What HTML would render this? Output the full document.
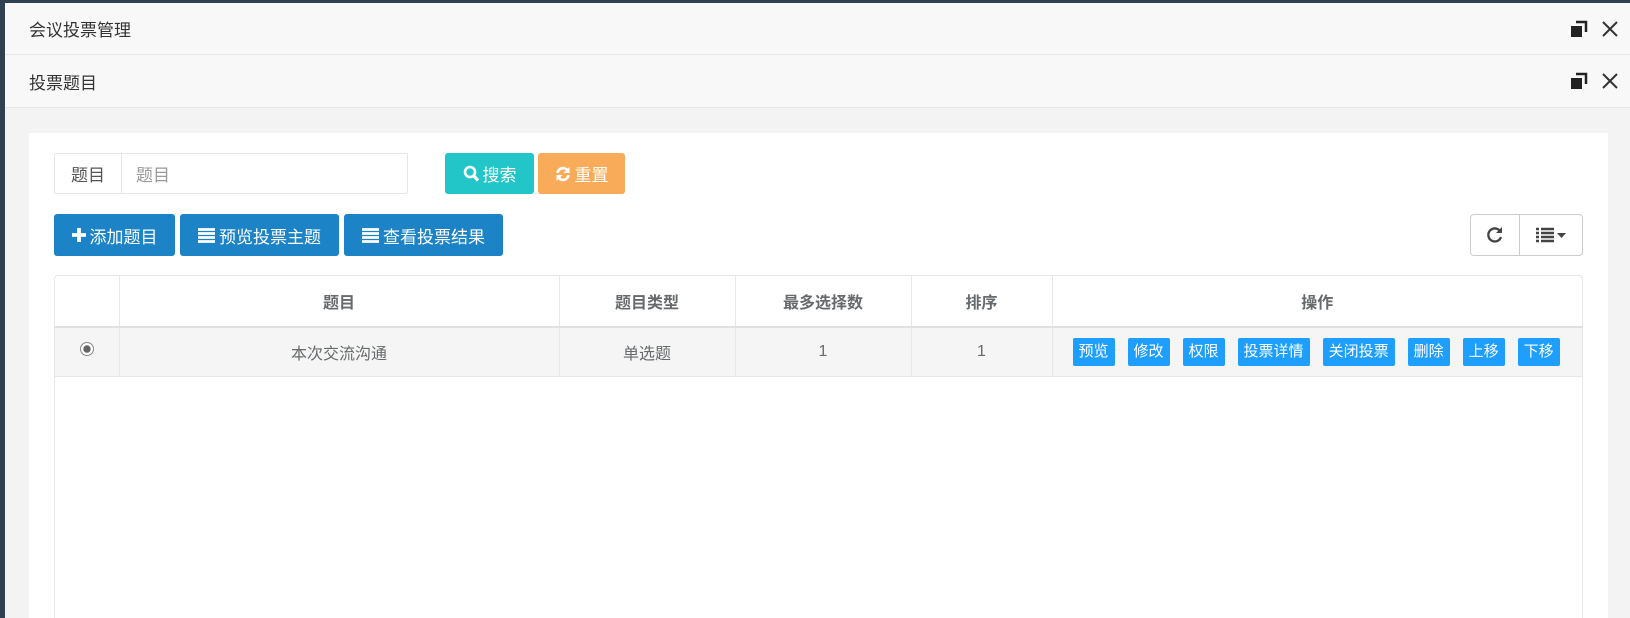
<!DOCTYPE html>
<html><head><meta charset="utf-8"><style>
*{box-sizing:border-box;margin:0;padding:0}
html,body{width:1630px;height:618px;overflow:hidden}
body{background:#2f4050;font-family:"Liberation Sans","Noto Sans CJK SC",sans-serif;position:relative}
.abs{position:absolute}
.hdr{left:5px;right:0;background:#f8f8f8;border-bottom:1px solid #e7e7e7;font-size:17px;color:#333;padding-left:24px;display:flex;align-items:center}
.ic{position:absolute;right:12px;display:flex;gap:14px;align-items:center}
.gray{left:5px;top:108px;right:0;height:510px;background:#f3f3f3}
.card{left:29px;top:133px;width:1579px;height:485px;background:#fff}
.btn{position:absolute;color:#fff;border-radius:3px;font-size:17px;display:flex;align-items:center;justify-content:center;gap:4px}
.blue{background:#1c84c6}
.tw{position:absolute;left:54px;top:275px;width:1529px;height:343px;overflow:hidden;border:1px solid #e7e7e7;border-bottom:none;border-radius:4px 4px 0 0}
table{border-collapse:collapse;width:100%;font-size:16px;color:#676a6c}
td,th{border:1px solid #e7e7e7;text-align:center}
th{height:51px;font-weight:bold;border-bottom:2px solid #e0e0e0;border-top:none}
td{height:49px;background:#f5f5f5}
tr td:first-child,tr th:first-child{border-left:none}
tr td:last-child,tr th:last-child{border-right:none}
.ab{display:inline-block;background:#1e9fff;color:#fff;font-size:15px;height:28px;line-height:28px;padding:0 6px;border-radius:2px;margin-right:13px}
</style></head><body>
<div class="abs hdr" style="top:3px;height:52px">会议投票管理
<div class="ic"><svg width="18" height="18"><path d="M6 2h10v10" stroke="#222" stroke-width="2.5" fill="none"/><rect x="1" y="6" width="11" height="11" fill="#222"/></svg><svg width="16" height="16"><path d="M1 1L15 15M15 1L1 15" stroke="#333" stroke-width="2"/></svg></div></div>
<div class="abs hdr" style="top:55px;height:53px">投票题目
<div class="ic"><svg width="18" height="18"><path d="M6 2h10v10" stroke="#222" stroke-width="2.5" fill="none"/><rect x="1" y="6" width="11" height="11" fill="#222"/></svg><svg width="16" height="16"><path d="M1 1L15 15M15 1L1 15" stroke="#333" stroke-width="2"/></svg></div></div>
<div class="abs gray"></div>
<div class="abs card"></div>
<div class="abs" style="left:54px;top:153px;width:354px;height:41px;border:1px solid #e5e6e7;display:flex;font-size:17px;border-radius:2px">
<div style="width:67px;border-right:1px solid #e5e6e7;display:flex;align-items:center;justify-content:center;color:#555">题目</div>
<div style="padding-left:14px;display:flex;align-items:center;color:#999">题目</div></div>
<div class="btn" style="left:445px;top:153px;width:89px;height:41px;background:#23c6c8"><svg width="16" height="17"><circle cx="7" cy="7" r="5" stroke="#fff" stroke-width="2.6" fill="none"/><path d="M10.5 10.5L15 15.5" stroke="#fff" stroke-width="3.2"/></svg>搜索</div>
<div class="btn" style="left:538px;top:153px;width:87px;height:41px;background:#f8ac59"><svg width="16" height="16"><path d="M2.5 7A5.5 5.5 0 0 1 12.5 4.5M13.5 9A5.5 5.5 0 0 1 3.5 11.5" stroke="#fff" stroke-width="2.7" fill="none"/><path d="M14.5 1v6h-6z M1.5 15v-6h6z" fill="#fff"/></svg>重置</div>
<div class="btn blue" style="left:54px;top:214px;width:121px;height:42px"><svg width="14" height="14"><path d="M7 0v14M0 7h14" stroke="#fff" stroke-width="3.8"/></svg>添加题目</div>
<div class="btn blue" style="left:180px;top:214px;width:159px;height:42px"><svg width="17" height="15"><path d="M0 1.5h17M0 5.5h17M0 9.5h17M0 13.5h17" stroke="#fff" stroke-width="2.8"/></svg>预览投票主题</div>
<div class="btn blue" style="left:344px;top:214px;width:159px;height:42px"><svg width="17" height="15"><path d="M0 1.5h17M0 5.5h17M0 9.5h17M0 13.5h17" stroke="#fff" stroke-width="2.8"/></svg>查看投票结果</div>
<div class="abs" style="left:1470px;top:214px;width:113px;height:42px;border:1px solid #ccc;border-radius:4px;display:flex">
<div style="width:49px;border-right:1px solid #ccc;display:flex;align-items:center;justify-content:center"><svg width="18" height="18"><path d="M14 5A6.5 6.5 0 1 0 15 11" stroke="#444" stroke-width="2.3" fill="none"/><path d="M16 1v6h-6z" fill="#444"/></svg></div>
<div style="flex:1;display:flex;align-items:center;justify-content:center;gap:3px"><svg width="18" height="16"><path d="M0 2h3M5 2h13M0 6h3M5 6h13M0 10h3M5 10h13M0 14h3M5 14h13" stroke="#444" stroke-width="2.6"/></svg><svg width="9" height="5"><path d="M0 0h9L4.5 5z" fill="#444"/></svg></div></div>
<div class="tw"><table>
<tr><th style="width:64px"></th><th style="width:440px">题目</th><th style="width:176px">题目类型</th><th style="width:176px">最多选择数</th><th style="width:141px">排序</th><th>操作</th></tr>
<tr><td><svg width="16" height="16"><circle cx="8" cy="8" r="6.5" fill="#fff" stroke="#888"/><circle cx="8" cy="8" r="3.7" fill="#666"/></svg></td><td>本次交流沟通</td><td>单选题</td><td>1</td><td>1</td>
<td style="text-align:left;padding-left:20px;white-space:nowrap"><span class="ab">预览</span><span class="ab">修改</span><span class="ab">权限</span><span class="ab">投票详情</span><span class="ab">关闭投票</span><span class="ab">删除</span><span class="ab">上移</span><span class="ab">下移</span></td></tr>
<tr><td colspan="6" style="height:260px;background:#fff;border-bottom:none"></td></tr>
</table></div>
</body></html>
